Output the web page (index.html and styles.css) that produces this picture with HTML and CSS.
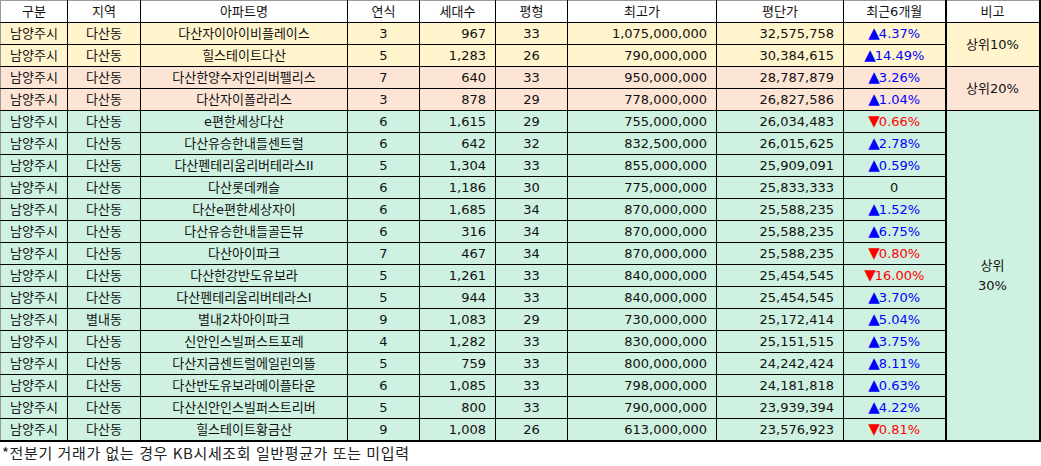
FILE: index.html
```html
<!DOCTYPE html>
<html lang="ko">
<head>
<meta charset="utf-8">
<title>다산동 아파트 시세</title>
<link rel="stylesheet" href="styles.css">
</head>
<body>
<table class="grid">
  <colgroup>
    <col class="c-gu"><col class="c-dong"><col class="c-name"><col class="c-year"><col class="c-hh">
    <col class="c-py"><col class="c-max"><col class="c-ppy"><col class="c-chg"><col class="c-note">
  </colgroup>
  <thead>
    <tr class="head">
      <th>구분</th><th>지역</th><th>아파트명</th><th>연식</th><th>세대수</th><th>평형</th><th>최고가</th><th>평단가</th><th>최근6개월</th><th class="note">비고</th>
    </tr>
  </thead>
  <tbody>
    <tr class="y"><td>남양주시</td><td>다산동</td><td>다산자이아이비플레이스</td><td>3</td><td class="r">967</td><td>33</td><td class="r">1,075,000,000</td><td class="r">32,575,758</td><td class="up"><span class="tri">▲</span>4.37%</td><td class="note" rowspan="2">상위10%</td></tr>
    <tr class="y"><td>남양주시</td><td>다산동</td><td>힐스테이트다산</td><td>5</td><td class="r">1,283</td><td>26</td><td class="r">790,000,000</td><td class="r">30,384,615</td><td class="up"><span class="tri">▲</span>14.49%</td></tr>
    <tr class="p"><td>남양주시</td><td>다산동</td><td>다산한양수자인리버펠리스</td><td>7</td><td class="r">640</td><td>33</td><td class="r">950,000,000</td><td class="r">28,787,879</td><td class="up"><span class="tri">▲</span>3.26%</td><td class="note" rowspan="2">상위20%</td></tr>
    <tr class="p"><td>남양주시</td><td>다산동</td><td>다산자이폴라리스</td><td>3</td><td class="r">878</td><td>29</td><td class="r">778,000,000</td><td class="r">26,827,586</td><td class="up"><span class="tri">▲</span>1.04%</td></tr>
    <tr class="g"><td>남양주시</td><td>다산동</td><td>e편한세상다산</td><td>6</td><td class="r">1,615</td><td>29</td><td class="r">755,000,000</td><td class="r">26,034,483</td><td class="down"><span class="tri">▼</span>0.66%</td><td class="note" rowspan="15">상위<br>30%</td></tr>
    <tr class="g"><td>남양주시</td><td>다산동</td><td>다산유승한내들센트럴</td><td>6</td><td class="r">642</td><td>32</td><td class="r">832,500,000</td><td class="r">26,015,625</td><td class="up"><span class="tri">▲</span>2.78%</td></tr>
    <tr class="g"><td>남양주시</td><td>다산동</td><td>다산펜테리움리버테라스II</td><td>5</td><td class="r">1,304</td><td>33</td><td class="r">855,000,000</td><td class="r">25,909,091</td><td class="up"><span class="tri">▲</span>0.59%</td></tr>
    <tr class="g"><td>남양주시</td><td>다산동</td><td>다산롯데캐슬</td><td>6</td><td class="r">1,186</td><td>30</td><td class="r">775,000,000</td><td class="r">25,833,333</td><td>0</td></tr>
    <tr class="g"><td>남양주시</td><td>다산동</td><td>다산e편한세상자이</td><td>6</td><td class="r">1,685</td><td>34</td><td class="r">870,000,000</td><td class="r">25,588,235</td><td class="up"><span class="tri">▲</span>1.52%</td></tr>
    <tr class="g"><td>남양주시</td><td>다산동</td><td>다산유승한내들골든뷰</td><td>6</td><td class="r">316</td><td>34</td><td class="r">870,000,000</td><td class="r">25,588,235</td><td class="up"><span class="tri">▲</span>6.75%</td></tr>
    <tr class="g"><td>남양주시</td><td>다산동</td><td>다산아이파크</td><td>7</td><td class="r">467</td><td>34</td><td class="r">870,000,000</td><td class="r">25,588,235</td><td class="down"><span class="tri">▼</span>0.80%</td></tr>
    <tr class="g"><td>남양주시</td><td>다산동</td><td>다산한강반도유보라</td><td>5</td><td class="r">1,261</td><td>33</td><td class="r">840,000,000</td><td class="r">25,454,545</td><td class="down"><span class="tri">▼</span>16.00%</td></tr>
    <tr class="g"><td>남양주시</td><td>다산동</td><td>다산펜테리움리버테라스I</td><td>5</td><td class="r">944</td><td>33</td><td class="r">840,000,000</td><td class="r">25,454,545</td><td class="up"><span class="tri">▲</span>3.70%</td></tr>
    <tr class="g"><td>남양주시</td><td>별내동</td><td>별내2차아이파크</td><td>9</td><td class="r">1,083</td><td>29</td><td class="r">730,000,000</td><td class="r">25,172,414</td><td class="up"><span class="tri">▲</span>5.04%</td></tr>
    <tr class="g"><td>남양주시</td><td>다산동</td><td>신안인스빌퍼스트포레</td><td>4</td><td class="r">1,282</td><td>33</td><td class="r">830,000,000</td><td class="r">25,151,515</td><td class="up"><span class="tri">▲</span>3.75%</td></tr>
    <tr class="g"><td>남양주시</td><td>다산동</td><td>다산지금센트럴에일린의뜰</td><td>5</td><td class="r">759</td><td>33</td><td class="r">800,000,000</td><td class="r">24,242,424</td><td class="up"><span class="tri">▲</span>8.11%</td></tr>
    <tr class="g"><td>남양주시</td><td>다산동</td><td>다산반도유보라메이플타운</td><td>6</td><td class="r">1,085</td><td>33</td><td class="r">798,000,000</td><td class="r">24,181,818</td><td class="up"><span class="tri">▲</span>0.63%</td></tr>
    <tr class="g"><td>남양주시</td><td>다산동</td><td>다산신안인스빌퍼스트리버</td><td>5</td><td class="r">800</td><td>33</td><td class="r">790,000,000</td><td class="r">23,939,394</td><td class="up"><span class="tri">▲</span>4.22%</td></tr>
    <tr class="g last"><td>남양주시</td><td>다산동</td><td>힐스테이트황금산</td><td>9</td><td class="r">1,008</td><td>26</td><td class="r">613,000,000</td><td class="r">23,576,923</td><td class="down"><span class="tri">▼</span>0.81%</td></tr>
  </tbody>
</table>
<p class="foot">*전분기 거래가 없는 경우 KB시세조회 일반평균가 또는 미입력</p>
</body>
</html>
```
FILE: styles.css
```css
html, body {
  margin: 0;
  padding: 0;
  background: #ffffff;
}
body {
  font-family: "DejaVu Sans", "Noto Sans CJK KR", sans-serif;
  font-size: 13px;
  color: #111;
}
.grid {
  border-collapse: collapse;
  table-layout: fixed;
  width: 1039px;
  border-top: 1px solid #9a9a9a;
  border-left: 1px solid #9a9a9a;
  border-right: 2px solid #000;
  border-bottom: 2px solid #000;
}
.c-gu { width: 67px; }
.c-dong { width: 73px; }
.c-name { width: 207px; }
.c-year { width: 72px; }
.c-hh { width: 76px; }
.c-py { width: 72px; }
.c-max { width: 149px; }
.c-ppy { width: 127px; }
.c-chg { width: 102px; }
.c-note { width: 94px; }
.grid th,
.grid td {
  border: 1px solid #000;
  padding: 0;
  height: 21px;
  line-height: 16px;
  text-align: center;
  font-weight: normal;
  white-space: nowrap;
  overflow: hidden;
}
.grid tr.head th {
  border-top: 1px solid #9a9a9a;
  background: #fff;
}
.grid tr.head th:first-child,
.grid td:first-child {
  border-left: 1px solid #9a9a9a;
}
.grid .note {
  border-left: 2px solid #000;
  border-right: 2px solid #000;
  line-height: 20px;
}
.grid td.r {
  text-align: right;
  padding-right: 9px;
}
.y td { background: #fff4cc; }
.p td { background: #fde5d6; }
.g td { background: #cef1e1; }
.grid tr.last td { border-bottom: 2px solid #000; }
.up { color: #0000ff; }
.down { color: #ff0000; }
.tri {
  font-size: 15px;
  line-height: 14px;
  margin-right: -1px;
}
.foot {
  margin: 2px 0 0 2px;
  font-family: "Noto Sans CJK KR", sans-serif;
  font-size: 15px;
  letter-spacing: 0.6px;
  line-height: 18px;
  color: #222;
}
```
